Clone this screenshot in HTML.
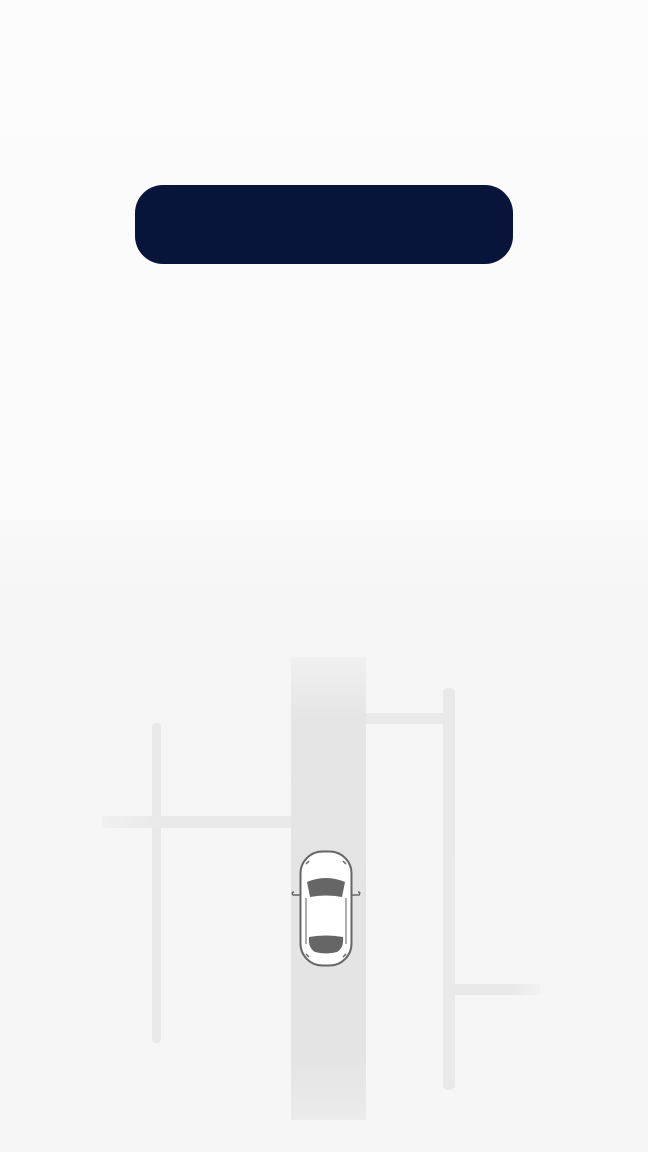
<!DOCTYPE html>
<html><head><meta charset="utf-8"><style>
html,body{margin:0;padding:0}
body{width:648px;height:1152px;position:relative;overflow:hidden;background:linear-gradient(#fcfcfc 0,#fafafa 500px,#f5f5f5 620px,#f6f6f6 1152px);font-family:"Liberation Sans",sans-serif}
.btn{position:absolute;left:135px;top:185px;width:378px;height:79px;border-radius:28px;background:#08143a}
.r{position:absolute;background:#e9e9e9}
</style></head><body>
<div class="btn"></div>
<div class="r" style="left:291px;top:657px;width:75px;height:463px;background:linear-gradient(#f0f0f0,#e5e5e5 60px,#e4e4e4 400px,#ebebeb)"></div>
<div class="r" style="left:152px;top:723px;width:9px;height:320px;border-radius:4px"></div>
<div class="r" style="left:102px;top:816px;width:189px;height:12px;background:linear-gradient(90deg,#f0f0f0,#e9e9e9 60px)"></div>
<div class="r" style="left:366px;top:713px;width:82px;height:11px"></div>
<div class="r" style="left:443px;top:688px;width:12px;height:402px;border-radius:5px"></div>
<div class="r" style="left:455px;top:984px;width:85px;height:11px;background:linear-gradient(90deg,#e9e9e9,#e9e9e9 60px,#f2f2f2)"></div>
<svg style="position:absolute;left:290px;top:848px" width="72" height="122" viewBox="0 0 72 122">
<path d="M4 44 Q1 44 3 47 L10 47 M68 44 Q71 44 69 47 L62 47" fill="none" stroke="#666" stroke-width="1.5"/>
<rect x="10.5" y="3.5" width="51" height="114" rx="22" ry="22" fill="#fff" stroke="#666" stroke-width="2"/>
<path d="M17 34 Q36 26 55 34 L52 49 Q36 46 20 49 Z" fill="#666"/>
<path d="M19 89 Q36 86 53 89 Q54 100 47 104 Q36 107 25 104 Q18 100 19 89 Z" fill="#666"/>
<path d="M16 50 L16 96 M56 50 L56 96" stroke="#777" stroke-width="1.2"/>
<path d="M16 16 l3 -3 M56 16 l-3 -3 M16 106 l3 3 M56 106 l-3 3" stroke="#666" stroke-width="1.5"/>
</svg>
</body></html>
